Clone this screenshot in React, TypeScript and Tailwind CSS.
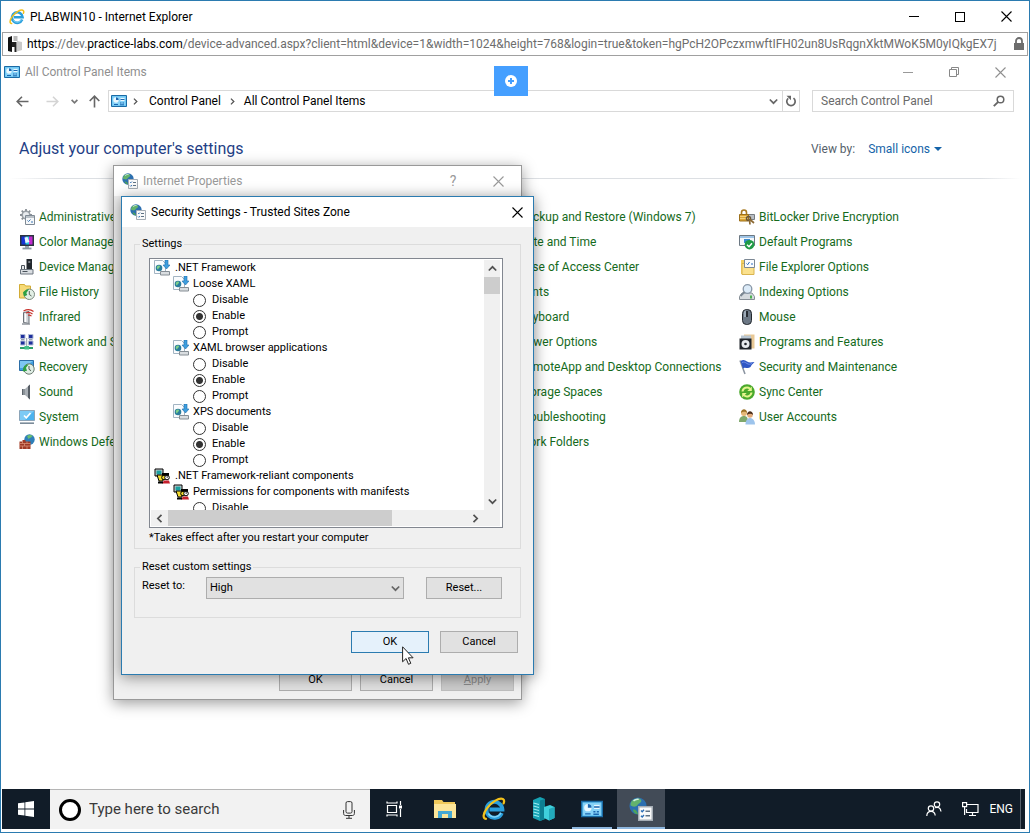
import { useState } from "react";
import type { ReactNode } from "react";
import clsx from "clsx";

type IconProps = { className?: string; size?: number };

function Svg({ size = 16, className, children }: IconProps & { children: ReactNode }) {
  return (
    <svg width={size} height={size} viewBox="0 0 16 16" fill="none" className={clsx("shrink-0", className)} aria-hidden="true">
      {children}
    </svg>
  );
}

/* ---------- shared icons ---------- */

function IeIcon({ size = 16 }: IconProps) {
  return (
    <Svg size={size}>
      <path d="M13.2 10.6a5.3 5.3 0 1 1 .4-2.3H5" stroke="#2a9fdc" strokeWidth="2.6" />
      <path d="M12.6 10.6a4.8 4.8 0 0 1-8.4.4" stroke="#7fd3f7" strokeWidth="1" />
      <path d="M2.6 14.6C.4 14.4.6 11 3.4 7.4 6.6 3.2 11.4.3 13.9 1.3c1 .5 1 1.7.5 3" stroke="#f3c11b" strokeWidth="1.5" strokeLinecap="round" />
    </Svg>
  );
}

function PanelIcon({ size = 16 }: IconProps) {
  return (
    <Svg size={size}>
      <path d="M.5 2.5h15v11H.5z" fill="#5fc0f0" stroke="#1a6aa5" />
      <path d="M1.5 3.500h13v9h-13z" fill="#86d2f8" />
      <circle cx="5" cy="7" r="2.7" fill="#e9f7fe" />
      <path d="M5 7V4.3A2.7 2.7 0 0 1 7.7 7z" fill="#1b66b0" />
      <path d="M9.5 5h4v3h-4z" fill="#e9f7fe" />
      <path d="M9.5 6.5h4M3 11.5h4M9 10h1.500M11.5 10H13M9 11.8h4" stroke="#1b66b0" />
    </Svg>
  );
}

function InternetIcon({ size = 16, className }: IconProps) {
  return (
    <Svg size={size} className={className}>
      <circle cx="6" cy="6" r="5.7" fill="#2c6fb0" />
      <path d="M2 2.5C4 .8 7 .5 8 1.800 9 3.5 6.5 4 5.5 5.5 4.5 7 2 6.5 1 5.5 1 4.5 1.3 3.3 2 2.500z" fill="#63b26c" />
      <path d="M2.5 8.500c1.5-.5 3 .5 3.500 3-1.500 0-3-1-3.500-3z" fill="#4fa35a" />
      <path d="M3 2.6c1-.9 2.5-1.3 3.500-1" stroke="#d4f0e0" />
      <path d="M6.5 6.500h9v9h-9z" fill="#fafafa" stroke="#a5adb5" />
      <path d="m8 9 .8.8L10 8.500M8 12.500l.8.8 1.200-1.300" stroke="#2a6db5" strokeWidth=".9" />
      <path d="M11 9.500h3M11 12.500h3" stroke="#5f7285" />
    </Svg>
  );
}

function Cross({ size = 11 }: IconProps) {
  return (
    <svg width={size} height={size} viewBox="0 0 11 11" aria-hidden="true">
      <path d="M.5.5l10 10M10.5.5l-10 10" stroke="currentColor" strokeWidth="1.1" />
    </svg>
  );
}

function Chevron({ className }: IconProps) {
  return (
    <svg width="9" height="9" viewBox="0 0 9 9" fill="none" className={clsx("shrink-0", className)} aria-hidden="true">
      <path d="M.8 2.500l3.700 3.700 3.700-3.700" stroke="currentColor" strokeWidth="1.700" />
    </svg>
  );
}

/* ---------- control panel item icons ---------- */

const itemIcons: Record<string, ReactNode> = {
  admin: (
    <Svg>
      <circle cx="7" cy="6" r="3.8" fill="#e8ebee" stroke="#9aa0a6" strokeWidth="1.600" />
      <path d="M7 0v2M7 10v2M1 6h2M11 6h2M2.700 1.700l1.500 1.500M11.300 1.700 9.800 3.200M2.700 10.300l1.500-1.500" stroke="#8a9096" strokeWidth="1.800" />
      <path d="M6.5 6.500h9v9h-9z" fill="#f5f7f9" stroke="#7f8a95" />
      <path d="M6.5 8h9" stroke="#7f8a95" />
      <path d="m8.500 11.500 1 1 2-2M12 13h2" stroke="#3b78b5" />
    </Svg>
  ),
  color: (
    <Svg>
      <path d="M1 1h14v11H1z" fill="#2b3440" />
      <path d="M2.500 2.500h4v8h-4z" fill="#1733d6" />
      <path d="M6.500 2.500h3.500v8H6.500z" fill="#25c4e8" />
      <path d="M10 2.500h3.500v8H10z" fill="#c22ad0" />
      <path d="m5.500 3.500 3-.5 2 5-4 1z" fill="#e9f7ff" />
      <path d="M6 12h4v2H6z" fill="#9aa4b0" />
      <path d="M3.500 14.500h9" stroke="#8b95a1" strokeWidth="1.800" />
    </Svg>
  ),
  device: (
    <Svg>
      <path d="M7.500 0h5.500v10H7.500z" fill="#22272d" />
      <path d="M9.300 3h2" stroke="#dfe3e8" />
      <path d="M2.500 6.500h3v4h-3z" fill="#e8eaec" stroke="#4a525a" />
      <path d="M1.500 10.500h12.500v4.500H1.500z" fill="#d9dde1" stroke="#6c757e" />
      <path d="M3.500 12.500h5" stroke="#4a525a" />
    </Svg>
  ),
  history: (
    <Svg>
      <path d="M.5.500h5l1 1.500h5V14H.5z" fill="#f6da76" stroke="#d3ac35" />
      <circle cx="10.300" cy="10.300" r="5.200" fill="#e2efe5" stroke="#7c8a80" />
      <path d="M10.300 7v3.500l2.200 1.500" stroke="#55605a" />
      <path d="M5 12.500 4 8.500c1.500-2 3.500-3.300 6-3.200L7.300 9l1 2z" fill="#2ea043" />
    </Svg>
  ),
  infrared: (
    <Svg>
      <path d="M4.500 3.500 10 2.500v12l-5.500-1z" fill="#cfd3d8" stroke="#6b7178" />
      <path d="M6.500 4.500v8.500" stroke="#fff" strokeWidth="1.500" />
      <path d="M3 15h8" stroke="#8f959b" strokeWidth="1.500" />
      <path d="M4.500 2C8 .3 12 .5 14.500 2.500M7 4c2-1 4.500-.5 6.500 1M9 6.300c1.500-.5 2.500 0 3.500.8" stroke="#c8312b" strokeWidth="1.200" />
    </Svg>
  ),
  network: (
    <Svg>
      <path d="M1.500.500h4.500v4H1.500zM9.500.500h4.500v4H9.500zM1.500 7h4.500v4H1.500zM9.500 7h4.500v4H9.500z" fill="#1e2f9c" stroke="#aebbd6" />
      <path d="M2 5.700h3.500M10 5.700h3.500" stroke="#7b879c" />
      <path d="M7.700 4v8.500" stroke="#8e9aa8" />
      <path d="M1 14h13" stroke="#2aa06a" strokeWidth="2" />
      <path d="M5.500 12h4.500v3.500H5.500z" fill="#43c08a" />
    </Svg>
  ),
  recovery: (
    <Svg>
      <path d="M.5 1.500h14v10H.5z" fill="#3f9fe0" stroke="#2b6da6" />
      <path d="M1 2h13L4 9H1z" fill="#7cc6f2" />
      <circle cx="10" cy="10" r="5.200" fill="#dfeee4" stroke="#6d7b73" />
      <path d="M10 7v3.300l2 1.400" stroke="#4c5851" />
      <path d="M4 12.500C3.500 8.500 6 5.300 9.800 5.300L7 8.700l1 3z" fill="#2ea043" />
    </Svg>
  ),
  sound: (
    <Svg>
      <path d="M3 5h3v6H3z" fill="#8b9298" />
      <path d="M6 5 11 .500v15l-5-4.500z" fill="#a9afb5" />
      <path d="M9 2.300 11 .500v15l-2-1.800z" fill="#565d64" />
      <path d="M3.500 5v6" stroke="#5c636a" />
    </Svg>
  ),
  system: (
    <Svg>
      <path d="M.5 1.500h15v10H.5z" fill="#4cb2ee" stroke="#8ba4b8" />
      <path d="M1 2h14L6 11H1z" fill="#7ccaf5" />
      <path d="m5 6.500 2.300 2.300L11.500 4" stroke="#fff" strokeWidth="1.600" />
      <path d="M1 14.200h14" stroke="#7b8b99" strokeWidth="1.600" />
    </Svg>
  ),
  firewall: (
    <Svg>
      <circle cx="10.500" cy="5.500" r="5.200" fill="#2f7fb9" />
      <path d="M8 2c2-1.500 4.500-1 5.500 0-1 2-3 1.500-4 3z" fill="#6abf6e" />
      <path d="M.5 7.500h3V6h3v1.500h5v7.500H.5z" fill="#9e3a26" />
      <path d="M.5 9.500h11M.5 12h11M3.500 7v2.500M8 7.500v2M5.500 9.500V12M3.500 12v3M8 12v3" stroke="#d98d74" strokeWidth=".8" />
    </Svg>
  ),
  lock: (
    <Svg>
      <path d="M2.500 6V3.500a2.500 2.500 0 0 1 5 0V6" stroke="#a87a22" strokeWidth="1.600" />
      <path d="M9 5.500h6.500v5H9z" fill="#b9bec4" stroke="#767c83" />
      <path d="M.5 5.500h9V12h-9z" fill="#dca535" stroke="#9d701b" />
      <path d="M1 7.500h8M1 9.500h8" stroke="#f3d27c" />
      <circle cx="9.500" cy="9.500" r="2" stroke="#6a5638" strokeWidth="1.500" />
      <path d="m10.500 11 .5 4.500M11 10.500l4 3.500" stroke="#8c6a35" strokeWidth="1.700" />
    </Svg>
  ),
  defaults: (
    <Svg>
      <path d="M.5 1.500h15v10H.5z" fill="#f4f7fa" stroke="#6c7883" />
      <path d="M1 3h14" stroke="#9fc4e6" strokeWidth="2" />
      <path d="M5 5h6v4H5z" fill="#3a8ad0" />
      <circle cx="10.500" cy="10.700" r="4.800" fill="#1f9a45" />
      <path d="m8 10.700 2 2 3-3.500" stroke="#fff" strokeWidth="1.500" />
    </Svg>
  ),
  folderOptions: (
    <Svg>
      <path d="M2 1h5v14H2z" fill="#f1cf62" />
      <path d="M3 4.500h12v11H3z" fill="#fbe18d" stroke="#d9b450" />
      <path d="M5.500.500h10v8h-10z" fill="#fafcff" stroke="#7c8894" />
      <path d="m7.500 4.500 1.200 1.200L10.500 3M12 5h2" stroke="#2f6fc0" />
    </Svg>
  ),
  indexing: (
    <Svg>
      <path d="M3 9h10l2.500 3.500v3H.5v-3z" fill="#d5dade" stroke="#868e96" />
      <circle cx="8.500" cy="5" r="4.300" fill="#dcebf8" stroke="#8796a6" strokeWidth="1.300" />
      <path d="m5.500 8-4 4" stroke="#7a8793" strokeWidth="1.800" />
      <path d="M12 11.500v3" stroke="#4bb04f" strokeWidth="2" />
    </Svg>
  ),
  mouse: (
    <Svg>
      <rect x="3.500" y=".5" width="9" height="15" rx="4" fill="#6c7885" stroke="#23282e" />
      <path d="M5 3c0-1 1-1.500 2-1.500v6.500H5z" fill="#9eabb8" />
      <path d="M8 2v6" stroke="#16191d" strokeWidth="1.600" />
    </Svg>
  ),
  programs: (
    <Svg>
      <path d="M5 .500h10.500v14H5z" fill="#e8c896" />
      <path d="M2 1.500h10v5H2z" fill="#b8c6d2" />
      <path d="M.5 4.500h12v11H.5z" fill="#20242a" />
      <circle cx="6.500" cy="10" r="4" fill="#e7eaee" />
      <circle cx="6.500" cy="10" r="1.300" fill="#20242a" />
    </Svg>
  ),
  flag: (
    <Svg>
      <path d="M1 1.500 6 15" stroke="#8a93a0" strokeWidth="1.500" />
      <path d="M1.500 2C4 .5 6 1 8 2.500s4.500 1 7.500.5C14 4.500 12.500 6 11.500 8c-2 1.500-4 1-5.500.8s-2 .7-2 1.200z" fill="#2f56c4" />
      <path d="M3 3.500c2-1 3.500 0 5 1s3 1 5 0" stroke="#7090e8" />
    </Svg>
  ),
  sync: (
    <Svg>
      <circle cx="8" cy="8" r="7.800" fill="#4aa92c" />
      <path d="M3.500 7.500A4.500 4.500 0 0 1 11 4.700M12.500 8.500A4.500 4.500 0 0 1 5 11.300" stroke="#e4f58e" strokeWidth="2" />
      <path d="M12.800 2.500v4.500H8.300zM3.200 13.500V9h4.500z" fill="#e4f58e" />
    </Svg>
  ),
  users: (
    <Svg>
      <circle cx="5" cy="4" r="3" fill="#e5b878" />
      <path d="M2 4c0-5 6-5 6 0C7 2.500 4 2 2 4z" fill="#9c7228" />
      <path d="M0 13c0-4 2-6 5-6s4 2 4 6z" fill="#7fa86c" />
      <circle cx="11" cy="6" r="2.800" fill="#e3ab7c" />
      <path d="M8 6c0-5 6-5 6 0-1.500-1.700-4-1.700-6 0z" fill="#4c2e1c" />
      <path d="M6.500 15.500c0-4 2-6.500 4.500-6.500s5 2.500 5 6.500z" fill="#9dc4ec" />
    </Svg>
  ),
};

type Item = { label: string; icon: string };

const leftItems: Item[] = [
  { label: "Administrative Tools", icon: "admin" },
  { label: "Color Management", icon: "color" },
  { label: "Device Manager", icon: "device" },
  { label: "File History", icon: "history" },
  { label: "Infrared", icon: "infrared" },
  { label: "Network and Sharing Center", icon: "network" },
  { label: "Recovery", icon: "recovery" },
  { label: "Sound", icon: "sound" },
  { label: "System", icon: "system" },
  { label: "Windows Defender Firewall", icon: "firewall" },
];

const middleItems: Item[] = [
  { label: "Backup and Restore (Windows 7)", icon: "history" },
  { label: "Date and Time", icon: "history" },
  { label: "Ease of Access Center", icon: "sync" },
  { label: "Fonts", icon: "folderOptions" },
  { label: "Keyboard", icon: "device" },
  { label: "Power Options", icon: "system" },
  { label: "RemoteApp and Desktop Connections", icon: "system" },
  { label: "Storage Spaces", icon: "indexing" },
  { label: "Troubleshooting", icon: "system" },
  { label: "Work Folders", icon: "folderOptions" },
];

const rightItems: Item[] = [
  { label: "BitLocker Drive Encryption", icon: "lock" },
  { label: "Default Programs", icon: "defaults" },
  { label: "File Explorer Options", icon: "folderOptions" },
  { label: "Indexing Options", icon: "indexing" },
  { label: "Mouse", icon: "mouse" },
  { label: "Programs and Features", icon: "programs" },
  { label: "Security and Maintenance", icon: "flag" },
  { label: "Sync Center", icon: "sync" },
  { label: "User Accounts", icon: "users" },
];

/* ---------- browser chrome ---------- */

function TitleBar() {
  return (
    <header className="flex h-[31px] shrink-0 items-center pl-2 text-xs text-black">
      <IeIcon />
      <h1 className="ml-[5px] flex-1">PLABWIN10 - Internet Explorer</h1>
      <button aria-label="Minimize" className="flex h-full w-[46px] items-center justify-center">
        <span className="h-px w-2.5 bg-black" />
      </button>
      <button aria-label="Maximize" className="flex h-full w-[46px] items-center justify-center">
        <span className="size-2.5 border border-black" />
      </button>
      <button aria-label="Close" className="flex h-full w-[46px] items-center justify-center">
        <Cross />
      </button>
    </header>
  );
}

function UrlBar() {
  return (
    <div className="mx-px flex h-6 shrink-0 items-center border border-[#a0a0a0] pl-1 pr-0.5 text-xs">
      <Svg>
        <path d="M1 1.500 5 0v16l-4-1z" fill="#111" />
        <path d="M5 6h4.500v10H7.500v-5H5z" fill="#222" />
        <path d="M6.500 0h4v5h-4z" fill="#b9b9b9" />
        <path d="m10 5 5 1v8l-5 1.500z" fill="#c9c9c9" />
      </Svg>
      <div role="textbox" aria-label="Address" className="ml-1 min-w-0 flex-1 overflow-hidden whitespace-nowrap text-[#6d6d6d]">
        <span className="text-black">https</span>://dev.<span className="text-black">practice-labs.com</span>
        /device-advanced.aspx?client=html&amp;device=1&amp;width=1024&amp;height=768&amp;login=true&amp;token=hgPcH2OPczxmwftIFH02un8UsRqgnXktMWoK5M0yIQkgEX7j
      </div>
      <svg width="12" height="14" viewBox="0 0 12 14" className="ml-1 shrink-0" aria-label="Secure">
        <path d="M3 6V4a3 3 0 0 1 6 0v2" fill="none" stroke="#6d6d6d" strokeWidth="1.800" />
        <path d="M1 6h10v7H1z" fill="#6d6d6d" />
      </svg>
    </div>
  );
}

/* ---------- control panel window ---------- */

function ItemColumn({ items, className }: { items: Item[]; className?: string }) {
  return (
    <ul className={className}>
      {items.map((item) => (
        <li key={item.label} className="flex h-[25px] items-center">
          <a href="#item" className="flex items-center gap-1 whitespace-nowrap text-xs text-[#156a1c]">
            {itemIcons[item.icon]}
            {item.label}
          </a>
        </li>
      ))}
    </ul>
  );
}

function ControlPanel() {
  return (
    <main className="flex flex-1 flex-col">
      <div className="mt-1 flex h-6 items-center pl-[3px] pr-1.5 text-xs text-[#8f8f8f]">
        <PanelIcon />
        <span className="ml-[5px] flex-1">All Control Panel Items</span>
        <button aria-label="Minimize" className="flex h-full w-[46px] items-center justify-center">
          <span className="h-px w-2.5 bg-[#999]" />
        </button>
        <button aria-label="Restore" className="flex h-full w-[46px] items-center justify-center">
          <svg width="10" height="10" viewBox="0 0 10 10" fill="none" stroke="#888" aria-hidden="true">
            <path d="M.5 2.500h7v7h-7zM2.500 2.500v-2h7v7h-2" />
          </svg>
        </button>
        <button aria-label="Close" className="flex h-full w-[46px] items-center justify-center">
          <Cross />
        </button>
      </div>

      <div className="mt-[6px] flex h-[22px] items-center pl-1.5 pr-[15px] text-xs text-black">
        <button aria-label="Back" className="flex w-[30px] justify-center text-[#666]">
          <svg width="13" height="11" viewBox="0 0 13 11" fill="none" stroke="currentColor" strokeWidth="1.600" aria-hidden="true">
            <path d="M6 .700 1.200 5.500 6 10.300M1.200 5.500H12.500" />
          </svg>
        </button>
        <button aria-label="Forward" className="flex w-[30px] justify-center text-[#d4d4d4]">
          <svg width="13" height="11" viewBox="0 0 13 11" fill="none" stroke="currentColor" strokeWidth="1.600" aria-hidden="true">
            <path d="M7 .700 11.800 5.500 7 10.300M11.800 5.500H.5" />
          </svg>
        </button>
        <button aria-label="Recent locations" className="flex w-[14px] justify-center text-[#777]">
          <svg width="7" height="7" viewBox="0 0 9 9" fill="none" aria-hidden="true">
            <path d="M.8 2.500l3.700 3.700 3.700-3.700" stroke="currentColor" strokeWidth="2.200" />
          </svg>
        </button>
        <button aria-label="Up" className="flex w-[27px] justify-center text-[#666]">
          <svg width="11" height="13" viewBox="0 0 11 13" fill="none" stroke="currentColor" strokeWidth="1.600" aria-hidden="true">
            <path d="M.7 6 5.500 1.200 10.300 6M5.500 1.200V12.500" />
          </svg>
        </button>
        <nav aria-label="Breadcrumb" className="flex h-full flex-1 items-center border border-[#d9d9d9] pl-0.5">
          <PanelIcon />
          <Chevron className="ml-[5px] size-[7px] -rotate-90 text-[#555]" />
          <a href="#control-panel" className="ml-2.5">Control Panel</a>
          <Chevron className="ml-2 size-[7px] -rotate-90 text-[#555]" />
          <a href="#all-items" className="ml-2 flex-1">All Control Panel Items</a>
          <button aria-label="Previous locations" className="mr-1 text-[#666]">
            <Chevron />
          </button>
          <button aria-label="Refresh" className="flex h-full w-[17px] items-center justify-center border-l border-[#d9d9d9]">
            <svg width="12" height="12" viewBox="0 0 12 12" fill="none" aria-hidden="true">
              <path d="M8.500 3.100a4.200 4.200 0 1 1-5.300.2" stroke="#666" strokeWidth="1.700" />
              <path d="M1.500.700H6v4.600z" fill="#666" />
            </svg>
          </button>
        </nav>
        <label className="ml-3 flex h-full w-[202px] items-center border border-[#d9d9d9] px-2">
          <input type="text" aria-label="Search Control Panel" placeholder="Search Control Panel" className="min-w-0 flex-1 outline-none placeholder:text-[#6a6a6a]" />
          <svg width="12" height="12" viewBox="0 0 12 12" fill="none" stroke="#666" aria-hidden="true">
            <circle cx="7.500" cy="4.500" r="3.300" strokeWidth="1.500" />
            <path d="M5.200 6.800.8 11.200" strokeWidth="1.900" />
          </svg>
        </label>
      </div>

      <div className="mt-[25px] flex h-6 items-center pl-[18px] pr-[87px]">
        <h2 className="flex-1 text-base text-[#1f3f86]">Adjust your computer's settings</h2>
        <span className="text-xs text-[#555f6b]">View by:</span>
        <button className="ml-[13px] flex items-center gap-1 text-xs text-[#1463a8]">
          Small icons
          <span className="size-0 border-x-4 border-t-4 border-x-transparent border-t-[#1463a8]" />
        </button>
      </div>
      <div className="mx-2 mt-[17px] h-px bg-[linear-gradient(to_right,transparent,#dcdfe3_5%,#dcdfe3_96%,transparent)]" />

      <div className="mt-[25px] grid grid-cols-4 pl-[18px] pr-[50px]">
        <ItemColumn items={leftItems} />
        <ItemColumn items={middleItems} className="col-start-3" />
        <ItemColumn items={rightItems} />
      </div>
    </main>
  );
}

/* ---------- dialogs ---------- */

function DialogButton({ children, className }: { children: ReactNode; className?: string }) {
  return (
    <button className={clsx("h-[22px] border", className ?? "border-[#adadad] bg-[#e1e1e1]")}>{children}</button>
  );
}

function InternetProperties() {
  return (
    <section
      aria-label="Internet Properties"
      className="absolute left-[112px] top-[164px] flex h-[535px] w-[409px] flex-col border border-[#999] bg-[#f0f0f0] text-[11px] shadow-[0_3px_14px_rgba(0,0,0,0.4)]"
    >
      <div className="flex h-[30px] items-center bg-white px-2 text-xs text-[#999]">
        <InternetIcon />
        <span className="ml-[5px] flex-1">Internet Properties</span>
        <button aria-label="Help" className="w-[46px] text-sm">?</button>
        <button aria-label="Close" className="flex w-[37px] justify-end pr-[9px]">
          <Cross />
        </button>
      </div>
      <div className="mt-auto grid grid-cols-[73px_73px_73px] justify-end gap-2 pb-2 pr-[7px] text-black">
        <DialogButton>OK</DialogButton>
        <DialogButton>Cancel</DialogButton>
        <DialogButton className="border-[#bfbfbf] bg-[#cccccc] text-[#8a8a8a]">
          <span className="underline">A</span>pply
        </DialogButton>
      </div>
    </section>
  );
}

function PageIcon() {
  return (
    <Svg>
      <path d="M.5.500h8l3 3v10H.5z" fill="#fafcfe" stroke="#a3b4c2" />
      <circle cx="5" cy="8" r="3.300" fill="#2a7d9c" />
      <path d="M3 6.500c1.500-1.500 3-1 3 0S4.500 8 4 9.500C3 9 2.500 7.500 3 6.500z" fill="#7fd08a" />
      <path d="M11 0h3v5h2l-3.500 4L9 5h2z" fill="#3e9ede" stroke="#1d6cab" strokeWidth=".6" />
      <path d="M6.500 11.500h9v3.500h-9z" fill="#d9dde0" stroke="#868e95" />
    </Svg>
  );
}

function ComponentIcon() {
  return (
    <Svg>
      <path d="M1 1h8v7H1z" fill="#cfd3d6" stroke="#000" />
      <path d="M2.500 2.500h5v4h-5z" fill="#1aa0a0" />
      <path d="M3 7h6v6H5z" fill="#f4dc2e" stroke="#000" />
      <path d="M8 5h7v4H8z" fill="#000" />
      <circle cx="10" cy="9.500" r="2.300" fill="#f4dc2e" stroke="#000" />
      <circle cx="13" cy="9.500" r="2.300" fill="#fff" stroke="#000" />
      <path d="M12.500 9h1.500" stroke="#000" />
      <path d="M8 15.500 10 12.500h5l1 3z" fill="#c51f2c" />
      <path d="M4 14.500h5" stroke="#000" strokeWidth="2" />
    </Svg>
  );
}

type Group = { title: string; name: string };

const frameworkGroups: Group[] = [
  { title: "Loose XAML", name: "loose-xaml" },
  { title: "XAML browser applications", name: "xaml-apps" },
  { title: "XPS documents", name: "xps" },
];

const choices = ["Disable", "Enable", "Prompt"];

type RadioGroupProps = { group: Group; icon: ReactNode; initial?: string; options?: string[] };

function RadioGroup({ group, icon, initial = "Enable", options = choices }: RadioGroupProps) {
  const [value, setValue] = useState(initial);

  return (
    <div role="radiogroup" aria-label={group.title}>
      <div className="flex h-4 items-center gap-1 pl-[22px]">
        {icon}
        {group.title}
      </div>
      {options.map((option) => (
        <label key={option} className="flex h-4 items-center gap-1.5 pl-[42px]">
          <input
            type="radio"
            name={group.name}
            checked={value === option}
            onChange={() => setValue(option)}
            className="size-[13px] appearance-none rounded-full border border-[#333] bg-white checked:bg-[radial-gradient(circle,#333_0_3px,transparent_4px)]"
          />
          {option}
        </label>
      ))}
    </div>
  );
}

function GroupHeading({ icon, children }: { icon: ReactNode; children: ReactNode }) {
  return (
    <div className="flex h-4 items-center gap-[5px] pl-[3px]">
      {icon}
      {children}
    </div>
  );
}

function SettingsList() {
  return (
    <div className="ml-[9px] mr-3 mt-1.5 grid h-[270px] grid-cols-[1fr_16px] grid-rows-[1fr_16px] border border-[#828790] bg-white p-px pr-0.5">
      <div className="overflow-hidden whitespace-nowrap">
        <GroupHeading icon={<PageIcon />}>.NET Framework</GroupHeading>
        {frameworkGroups.map((group) => (
          <RadioGroup key={group.name} group={group} icon={<PageIcon />} />
        ))}
        <GroupHeading icon={<ComponentIcon />}>.NET Framework-reliant components</GroupHeading>
        <RadioGroup
          group={{ title: "Permissions for components with manifests", name: "manifests" }}
          icon={<ComponentIcon />}
          initial=""
          options={["Disable"]}
        />
      </div>
      <div className="flex flex-col items-center bg-[#f0f0f0] text-[#505050]">
        <button aria-label="Scroll up" className="flex h-[17px] w-full items-center justify-center">
          <Chevron className="rotate-180" />
        </button>
        <div className="h-[17px] w-full bg-[#cdcdcd]" />
        <button aria-label="Scroll down" className="mt-auto flex h-[17px] w-full items-center justify-center">
          <Chevron />
        </button>
      </div>
      <div className="flex items-center bg-[#f0f0f0] text-[#505050]">
        <button aria-label="Scroll left" className="flex h-full w-[17px] items-center justify-center">
          <Chevron className="rotate-90" />
        </button>
        <div className="h-full w-[224px] bg-[#cdcdcd]" />
        <button aria-label="Scroll right" className="ml-auto flex h-full w-[17px] items-center justify-center">
          <Chevron className="-rotate-90" />
        </button>
      </div>
      <div className="bg-[#f0f0f0]" />
    </div>
  );
}

function SecuritySettings() {
  return (
    <section
      aria-label="Security Settings - Trusted Sites Zone"
      className="absolute left-[120px] top-[195px] w-[413px] border border-[#2b7bb0] bg-[#f0f0f0] pb-[21px] text-[11px] text-black shadow-[0_2px_14px_rgba(0,0,0,0.45)]"
    >
      <div className="flex h-[30px] items-center bg-white pl-2">
        <InternetIcon />
        <h2 className="ml-[5px] flex-1 text-xs">Security Settings - Trusted Sites Zone</h2>
        <button aria-label="Close" className="flex h-full w-[31px] items-center justify-center">
          <Cross />
        </button>
      </div>

      <div className="px-3 pt-[9px]">
        <fieldset className="border border-[#dcdcdc] px-[5px]">
          <legend className="h-4 px-0.5 leading-4">Settings</legend>
          <SettingsList />
          <p className="ml-[9px] h-5 leading-5">*Takes effect after you restart your computer</p>
        </fieldset>

        <fieldset className="mt-2.5 h-[59px] border border-[#dcdcdc] px-[5px]">
          <legend className="h-4 px-0.5 leading-4">Reset custom settings</legend>
          <div className="mr-[13px] flex items-start pl-0.5 pt-0.5">
            <label htmlFor="reset-to" className="w-16 leading-[18px]">Reset to:</label>
            <div className="relative flex-1">
              <select id="reset-to" defaultValue="High" className="h-[22px] w-full appearance-none border border-[#adadad] bg-[#e1e1e1] px-[3px]">
                <option>High</option>
                <option>Medium</option>
                <option>Low</option>
              </select>
              <Chevron className="pointer-events-none absolute right-1 top-[7px] text-[#666]" />
            </div>
            <DialogButton className="ml-[22px] w-[76px] border-[#adadad] bg-[#e1e1e1]">Reset...</DialogButton>
          </div>
        </fieldset>

        <div className="mt-[13px] flex justify-end gap-[11px] pr-[3px]">
          <DialogButton className="w-[78px] border-[#2b7bb0] bg-[#e5f1fb]">OK</DialogButton>
          <DialogButton className="w-[78px] border-[#adadad] bg-[#e1e1e1]">Cancel</DialogButton>
        </div>
      </div>
    </section>
  );
}

function Cursor() {
  return (
    <svg width="13" height="20" viewBox="0 0 13 20" className="pointer-events-none absolute left-[401px] top-[645px]" aria-hidden="true">
      <path d="M.6.800v15l3.500-3.300 2.400 5.800 2.300-1-2.400-5.500h4.700z" fill="#fff" stroke="#222" />
    </svg>
  );
}

/* ---------- taskbar ---------- */

function TaskButton({ label, className, children }: { label: string; className?: string; children: ReactNode }) {
  return (
    <button aria-label={label} className={clsx("relative flex h-full w-12 items-center justify-center", className)}>
      {children}
    </button>
  );
}

function Taskbar() {
  return (
    <footer className="mb-[3px] ml-px mr-1 flex h-10 shrink-0 items-stretch bg-[#111c28] text-white">
      <TaskButton label="Start">
        <Svg>
          <path d="M0 2.300 6.500 1.400v6.100H0zM7.300 1.300 16 0v7.500H7.300zM0 8.400h6.500v6.200L0 13.700zM7.300 8.400H16V16l-8.700-1.300z" fill="#fff" />
        </Svg>
      </TaskButton>
      <label className="flex w-80 items-center border-t border-[#b5b5b5] bg-[#f2f2f2] px-[9px]">
        <span className="size-[22px] shrink-0 rounded-full border-[3px] border-black bg-white" />
        <input type="text" aria-label="Type here to search" placeholder="Type here to search" className="ml-2 min-w-0 flex-1 text-[15px] outline-none placeholder:text-[#3a3a3a]" />
        <svg width="12" height="18" viewBox="0 0 12 18" fill="none" stroke="#333" className="mr-1.5" aria-hidden="true">
          <rect x="3" y=".6" width="6" height="11.500" rx="1.500" />
          <path d="M.6 9v3.500c0 1.300.8 2 2 2h6.800c1.200 0 2-.7 2-2V9M6 14.500V17M3 17.300h6" />
        </svg>
      </label>
      <TaskButton label="Task View">
        <svg width="17" height="16" viewBox="0 0 17 16" fill="none" stroke="#fff" strokeWidth="1.200" aria-hidden="true">
          <path d="M1.500 4.500h9v7h-9zM1 .500v1.500h10V.500M1 15.500V14h10v1.500M14.500 0v4M14.500 8v8" />
          <path d="M13 4.500h3v3h-3z" fill="#fff" stroke="none" />
        </svg>
      </TaskButton>
      <div className="ml-[3px] flex gap-px">
        <TaskButton label="File Explorer">
          <svg width="22" height="20" viewBox="0 0 22 20" aria-hidden="true">
            <path d="M0 1h8l1.500 2H21v16H0z" fill="#f0c95b" />
            <path d="M0 5h22v14H0z" fill="#fde69a" />
            <path d="M4 12h14v7h-4v-4H8v4H4z" fill="#46a9d4" />
          </svg>
        </TaskButton>
        <TaskButton label="Internet Explorer">
          <IeIcon size={24} />
        </TaskButton>
        <TaskButton label="Server Manager">
          <svg width="23" height="24" viewBox="0 0 23 24" aria-hidden="true">
            <path d="M1 3 8 0l5 2v20l-5 2-7-3z" fill="#17a3b4" />
            <path d="M8 3.500 13 2v20l-5 2z" fill="#0d7f92" />
            <path d="m12 10 6-2 4.500 2v11L17 23.500 12 21z" fill="#3fd0dc" />
            <path d="m17 12 5.500-2v11L17 23.500z" fill="#22a9bb" />
            <path d="M1.500 6 7 7.500M1.500 9 7 10.500M1.500 12 7 13.500M1.500 15 7 16.500M1.500 18 7 19.500" stroke="#9deef2" strokeWidth="1.200" />
          </svg>
        </TaskButton>
        <TaskButton label="Control Panel">
          <PanelIcon size={22} />
          <span className="absolute inset-x-1 bottom-0 h-0.5 bg-[#8eb7df]" />
        </TaskButton>
        <TaskButton label="Internet Properties" className="bg-[#424b57]">
          <InternetIcon size={24} />
          <span className="absolute inset-x-0 bottom-0 h-0.5 bg-[#8eb7df]" />
        </TaskButton>
      </div>
      <div className="ml-auto flex items-center gap-5 border-r border-[#56606b] pr-[7px]">
        <svg width="16" height="16" viewBox="0 0 16 16" fill="none" stroke="#fff" strokeWidth="1.200" aria-label="People">
          <circle cx="5" cy="7.500" r="2.700" />
          <path d="M.8 15c0-3 1.700-4.700 4.200-4.700S9 12 9.200 14.500" />
          <circle cx="11" cy="3.500" r="2.700" />
          <path d="M9 6.800c3-1.300 5.500.2 6 3.700" />
        </svg>
        <div className="flex items-center gap-2.5">
          <svg width="17" height="16" viewBox="0 0 17 16" fill="none" stroke="#fff" strokeWidth="1.200" aria-label="Network">
            <path d="M5 3.500h11v8H4.500V8M7 14.500h7M10.500 11.500v3" />
            <path d="M.6 1.600h4v4h-4zM2.600 5.600v8.500" />
          </svg>
          <span className="text-xs">ENG</span>
        </div>
      </div>
      <div className="w-1" />
    </footer>
  );
}

export default function App() {
  return (
    <div className="relative flex min-h-screen flex-col border border-[#2b7bb0] bg-white font-[Roboto,sans-serif]">
      <TitleBar />
      <UrlBar />
      <ControlPanel />
      <Taskbar />
      <button aria-label="Show toolbar" className="absolute left-[493px] top-[65px] flex h-[30px] w-[34px] items-center justify-center bg-[#459fff]">
        <svg width="12" height="12" viewBox="0 0 12 12" aria-hidden="true">
          <circle cx="6" cy="6" r="6" fill="#fff" />
          <path d="M6 3v6M3 6h6" stroke="#459fff" strokeWidth="2" />
        </svg>
      </button>
      <InternetProperties />
      <SecuritySettings />
      <Cursor />
    </div>
  );
}
